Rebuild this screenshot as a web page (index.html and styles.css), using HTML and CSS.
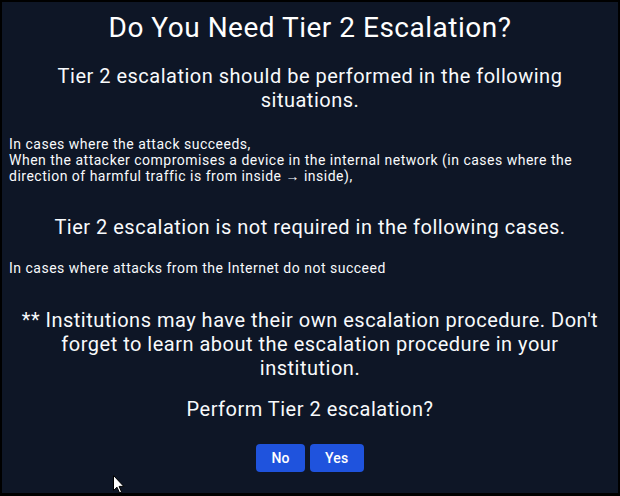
FILE: index.html
```html
<!DOCTYPE html>
<html lang="en">
<head>
<meta charset="utf-8">
<title>Do You Need Tier 2 Escalation?</title>
<link rel="stylesheet" href="styles.css">
</head>
<body>
<div class="frame">
  <div class="dialog">
    <h1 class="title">Do You Need Tier 2 Escalation?</h1>
    <p class="heading heading-first">Tier 2 escalation should be performed in the following situations.</p>
    <div class="cases">
      <div>In cases where the attack succeeds,</div>
      <div>When the attacker compromises a device in the internal network (in cases where the direction of harmful traffic is from inside → inside),</div>
    </div>
    <p class="heading heading-second">Tier 2 escalation is not required in the following cases.</p>
    <div class="cases cases-second">
      <div>In cases where attacks from the Internet do not succeed</div>
    </div>
    <p class="heading note">** Institutions may have their own escalation procedure. Don't forget to learn about the escalation procedure in your institution.</p>
    <p class="heading question">Perform Tier 2 escalation?</p>
    <div class="actions">
      <button class="btn" type="button">No</button>
      <button class="btn" type="button">Yes</button>
    </div>
  </div>
  <svg class="cursor" width="12" height="19" viewBox="0 0 12 19" aria-hidden="true">
    <path d="M0.5 0.5 L0.5 15.5 L4 12.2 L6.6 18 L8.6 17.1 L6.1 11.4 L10.8 11.4 Z" fill="#fff" stroke="#000" stroke-width="1"/>
  </svg>
</div>
</body>
</html>
```

FILE: styles.css
```css
* { box-sizing: border-box; }
html, body {
  margin: 0;
  padding: 0;
  background: #000;
}
.frame {
  position: relative;
  width: 620px;
  height: 496px;
  border: 2px solid #000;
  border-bottom-width: 3px;
  background: #0e1626;
  overflow: hidden;
}
.dialog {
  padding: 9px 7px 0 7px;
  font-family: Roboto, "Liberation Sans", sans-serif;
  color: #f8fafc;
  line-height: normal;
  letter-spacing: 0.5px;
}
.title {
  margin: 0;
  font-size: 28px;
  font-weight: 400;
  text-align: center;
  color: #fff;
}
.heading {
  margin: 0;
  font-size: 20px;
  font-weight: 400;
  text-align: center;
  padding: 0 10px;
}
.heading-first { margin-top: 20px; }
.cases {
  margin-top: 24px;
  font-size: 14px;
  text-align: left;
}
.heading-second { margin-top: 31px; }
.cases-second { margin-top: 21px; }
.note { margin-top: 32px; padding: 0 6px; }
.question { margin-top: 17px; }
.actions {
  margin-top: 23px;
  display: flex;
  justify-content: center;
  gap: 5px;
}
.btn {
  height: 28px;
  padding: 0 15px;
  border: 0;
  border-radius: 4px;
  background: #1f53dd;
  color: #fff;
  font-family: Roboto, "Liberation Sans", sans-serif;
  font-size: 14px;
  font-weight: 500;
  letter-spacing: 0.3px;
}
.cursor {
  position: absolute;
  left: 111px;
  top: 473px;
}
```
